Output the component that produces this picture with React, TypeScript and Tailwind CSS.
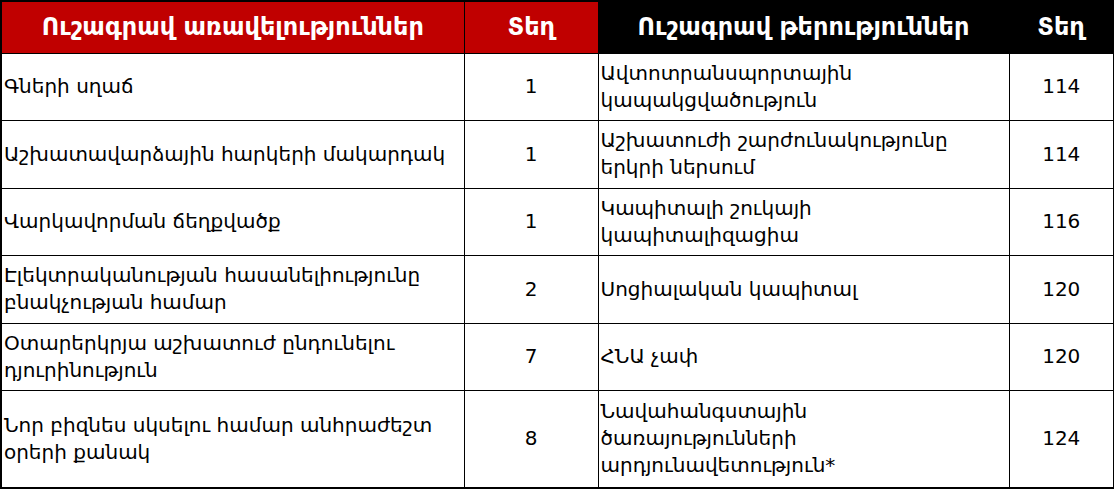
import React from "react";

const rows: { a: string[]; b: string; c: string[]; d: string; h: string }[] = [
  { a: ["Գների սղաճ"], b: "1", c: ["Ավտոտրանսպորտային", "կապակցվածություն"], d: "114", h: "h-[67px]" },
  { a: ["Աշխատավարձային հարկերի մակարդակ"], b: "1", c: ["Աշխատուժի շարժունակությունը", "երկրի ներսում"], d: "114", h: "h-[68px]" },
  { a: ["Վարկավորման ճեղքվածք"], b: "1", c: ["Կապիտալի շուկայի", "կապիտալիզացիա"], d: "116", h: "h-[67px]" },
  { a: ["Էլեկտրականության հասանելիությունը", "բնակչության համար"], b: "2", c: ["Սոցիալական կապիտալ"], d: "120", h: "h-[68px]" },
  { a: ["Օտարերկրյա աշխատուժ ընդունելու", "դյուրինություն"], b: "7", c: ["ՀՆԱ չափ"], d: "120", h: "h-[67px]" },
  { a: ["Նոր բիզնես սկսելու համար անհրաժեշտ", "օրերի քանակ"], b: "8", c: ["Նավահանգստային", "ծառայությունների", "արդյունավետություն*"], d: "124", h: "h-[98px]" },
];

export default function App() {
  return (
    <div className="w-[1114px] h-[489px] bg-white overflow-hidden font-['DejaVu_Sans',sans-serif] text-black">
      <table className="border-collapse table-fixed w-[1113px] border-2 border-black">
        <colgroup>
          <col className="w-[463px]" />
          <col className="w-[134px]" />
          <col className="w-[411px]" />
          <col className="w-[105px]" />
        </colgroup>
        <thead>
          <tr className="h-[52px] text-white font-bold text-[24px]">
            <th className="bg-[#c00000] text-center align-middle">Ուշագրավ առավելություններ</th>
            <th className="bg-[#c00000] text-center align-middle border-l border-black">Տեղ</th>
            <th className="bg-black text-center align-middle">Ուշագրավ թերություններ</th>
            <th className="bg-black text-center align-middle">Տեղ</th>
          </tr>
        </thead>
        <tbody className="text-[20px] leading-[27px]">
          {rows.map((r, i) => (
            <tr key={i} className={r.h}>
              <td className="border border-black px-[2px] align-middle">
                {r.a.map((t, j) => (
                  <div key={j} className="whitespace-nowrap">{t}</div>
                ))}
              </td>
              <td className="border border-black text-center align-middle">{r.b}</td>
              <td className="border border-black px-[2px] align-middle">
                {r.c.map((t, j) => (
                  <div key={j} className="whitespace-nowrap">{t}</div>
                ))}
              </td>
              <td className="border border-black text-center align-middle">{r.d}</td>
            </tr>
          ))}
        </tbody>
      </table>
    </div>
  );
}
